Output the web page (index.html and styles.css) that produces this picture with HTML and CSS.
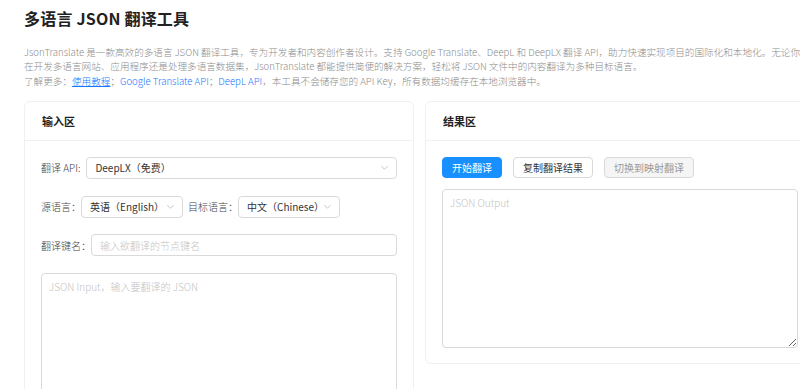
FILE: index.html
```html
<!DOCTYPE html>
<html lang="zh-CN">
<head>
  <meta charset="UTF-8">
  <title>多语言 JSON 翻译工具</title>
  <meta name="viewport" content="width=device-width, initial-scale=1">
  <link rel="stylesheet" href="styles.css">
</head>
<body>
  <div class="page">
    <h1>多语言 JSON 翻译工具</h1>
    <p class="intro">JsonTranslate 是一款高效的多语言 JSON 翻译工具，专为开发者和内容创作者设计。支持 Google Translate、DeepL 和 DeepLX 翻译 API，助力快速实现项目的国际化和本地化。无论你是在开发多语言网站、应用程序还是处理多语言数据集，JsonTranslate 都能提供简便的解决方案，轻松将 JSON 文件中的内容翻译为多种目标语言。</p>
    <p class="intro">了解更多：<a href="#" class="tutorial">使用教程</a>；<a href="#">Google Translate API</a>；<a href="#">DeepL API</a>，本工具不会储存您的 API Key，所有数据均缓存在本地浏览器中。</p>

    <div class="panels">
      <div class="card">
        <div class="card-head">输入区</div>
        <div class="card-body">
          <div class="field">
            <span class="field-label api">翻译 API:</span>
            <div class="select wide">
              <span>DeepLX（免费）</span>
              <svg class="arrow" viewBox="0 0 10 10" width="9" height="9"><path d="M1.5 3.5 L5 7 L8.5 3.5" fill="none" stroke="#bfbfbf" stroke-width="1"/></svg>
            </div>
          </div>
          <div class="field">
            <span class="field-label">源语言：</span>
            <div class="select lang">
              <span>英语（English）</span>
              <svg class="arrow" viewBox="0 0 10 10" width="9" height="9"><path d="M1.5 3.5 L5 7 L8.5 3.5" fill="none" stroke="#bfbfbf" stroke-width="1"/></svg>
            </div>
            <span class="field-label gap-left">目标语言：</span>
            <div class="select lang">
              <span>中文（Chinese）</span>
              <svg class="arrow" viewBox="0 0 10 10" width="9" height="9"><path d="M1.5 3.5 L5 7 L8.5 3.5" fill="none" stroke="#bfbfbf" stroke-width="1"/></svg>
            </div>
          </div>
          <div class="field">
            <span class="field-label">翻译键名：</span>
            <input type="text" class="text-input" placeholder="输入欲翻译的节点键名">
          </div>
          <textarea class="json-box tall" placeholder="JSON Input，输入要翻译的 JSON"></textarea>
        </div>
      </div>

      <div class="card">
        <div class="card-head">结果区</div>
        <div class="card-body">
          <div class="actions">
            <button class="btn primary">开始翻译</button>
            <button class="btn">复制翻译结果</button>
            <button class="btn muted">切换到映射翻译</button>
          </div>
          <textarea class="json-box" placeholder="JSON Output"></textarea>
        </div>
      </div>
    </div>
  </div>
</body>
</html>
```

FILE: styles.css
```css
html, body { margin: 0; padding: 0; background: #fff; overflow: hidden; }
body { font-family: "Noto Sans CJK SC", "Noto Sans", sans-serif; color: #333; }
.page { width: 791px; padding: 0 24px; }
h1 { font-size: 16px; font-weight: 700; color: #222; margin: 7px 0 16px 0; line-height: 22px; letter-spacing: 0.2px; }
.intro { font-size: 9.6px; line-height: 14.3px; color: #8c8c8c; margin: 0; font-weight: 300; }
.intro a { color: #1677ff; text-decoration: none; }
.intro a.tutorial { text-decoration: underline; }

.panels { display: flex; gap: 11px; margin-top: 13px; align-items: flex-start; }
.card { flex: 0 0 390px; box-sizing: border-box; border: 1px solid #f0f0f0; border-radius: 6px; background: #fff; }
.card-head { height: 38px; line-height: 38px; padding: 0 17px; font-size: 11px; font-weight: 700; color: #222; border-bottom: 1px solid #f0f0f0; }
.card-body { padding: 16px 16px 15px 16px; }

.field { display: flex; align-items: center; height: 22px; margin-bottom: 16.7px; font-size: 10px; }
.field-label { color: #444; white-space: nowrap; font-weight: 300; }
.field-label.api { margin-right: 6px; }
.gap-left { margin-left: 5px; }
.select { box-sizing: border-box; height: 22px; border: 1px solid #d9d9d9; border-radius: 4px; display: flex; align-items: center; justify-content: space-between; padding: 0 7px 0 8px; color: #333; font-size: 10px; }
.select.wide { flex: 1; }
.select.lang { width: 102px; }
.arrow { display: block; }
.text-input { flex: 1; box-sizing: border-box; height: 22px; border: 1px solid #d9d9d9; border-radius: 4px; padding: 0 8px; font-family: inherit; font-size: 10px; outline: none; }
.text-input::placeholder { color: #c4c4c4; font-weight: 300; }

.json-box { display: block; width: 100%; box-sizing: border-box; height: 159px; border: 1px solid #d9d9d9; border-radius: 4px; padding: 5px 7px; font-family: inherit; font-size: 10px; outline: none; }
.json-box.tall { height: 200px; }
.json-box::placeholder { color: #c4c4c4; font-weight: 300; }

.actions { display: flex; gap: 11px; margin-bottom: 11px; }
.btn { height: 21px; box-sizing: border-box; padding: 0 9px; font-family: inherit; font-size: 10px; border: 1px solid #d9d9d9; border-radius: 4px; background: #fff; color: #333; cursor: pointer; }
.btn.primary { background: #1890ff; border-color: #1890ff; color: #fff; }
.btn.muted { background: #f5f5f5; color: #999; }
```
